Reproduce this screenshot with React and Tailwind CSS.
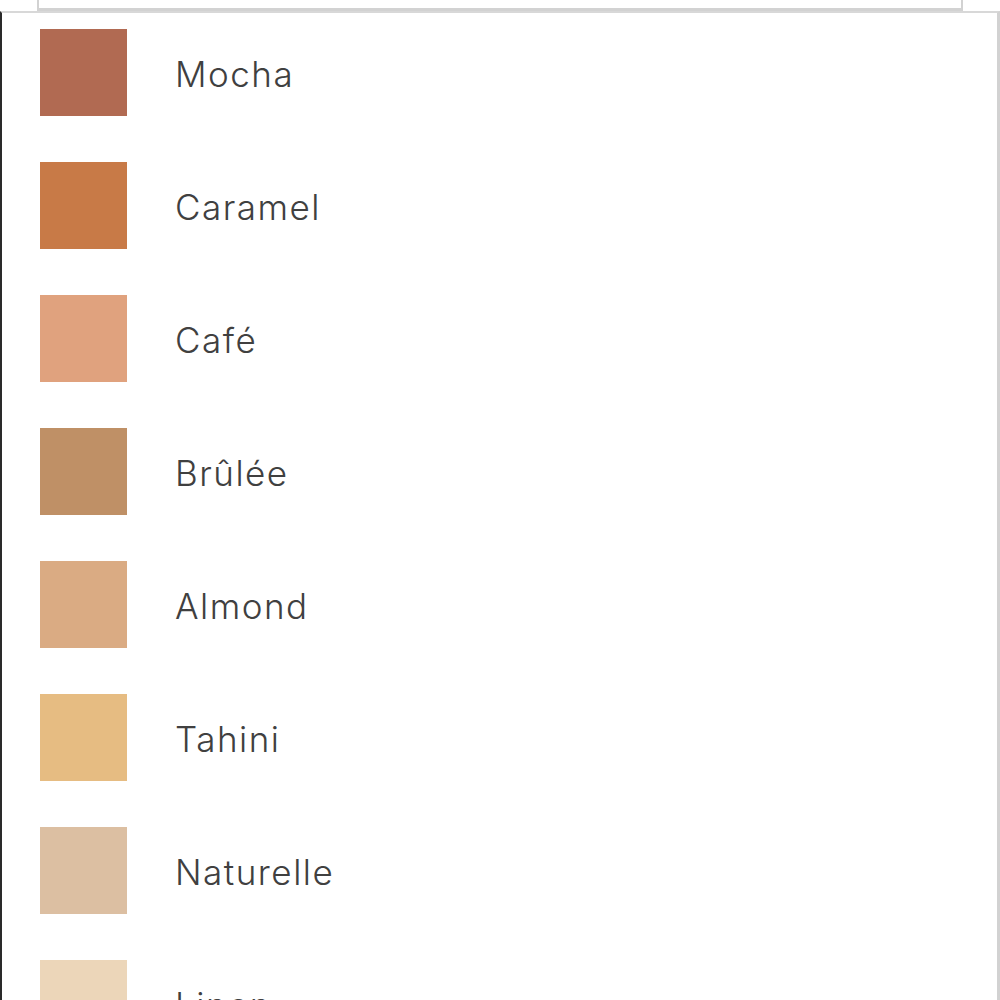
import React from "react";

const shades = [
  { name: "Mocha", color: "#b16a52" },
  { name: "Caramel", color: "#c87a47" },
  { name: "Café", color: "#e0a27e" },
  { name: "Brûlée", color: "#bf9066" },
  { name: "Almond", color: "#daab83" },
  { name: "Tahini", color: "#e6bc82" },
  { name: "Naturelle", color: "#dcbfa2" },
  { name: "Linen", color: "#ecd6b9" },
];

export default function App() {
  return (
    <div className="relative h-[1000px] w-[1000px] overflow-hidden bg-white font-['Inter',sans-serif]">
      <div className="mx-[37px] h-[11px] border-x-2 border-b-[3px] border-[#d2d2d2] bg-white" />
      <div className="h-[989px] border-l-2 border-r-[3px] border-t-2 border-l-[#2a2a2a] border-r-[#d2d2d2] border-t-[#d8d8d8] bg-white">
        <ul className="flex flex-col gap-[46px] pl-[38px] pt-[16px]">
          {shades.map((s) => (
            <li key={s.name} className="flex items-center">
              <div
                className="h-[87px] w-[87px] shrink-0"
                style={{ backgroundColor: s.color }}
              />
              <span className="ml-[48px] pt-[3px] text-[35px] font-light tracking-[1.5px] text-[#404040]">
                {s.name}
              </span>
            </li>
          ))}
        </ul>
      </div>
    </div>
  );
}
